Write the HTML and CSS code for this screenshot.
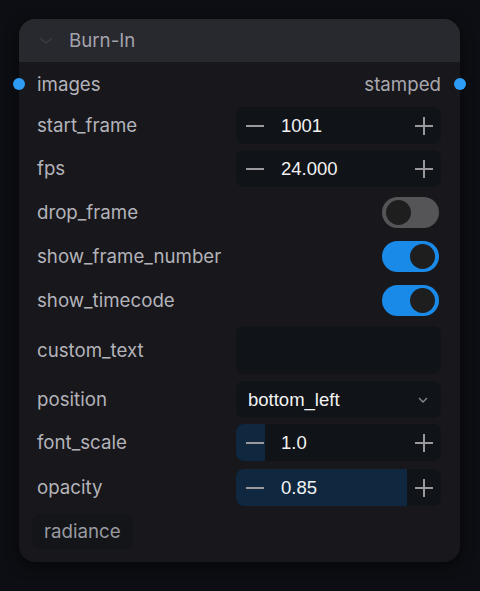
FILE: index.html
```html
<!DOCTYPE html>
<html lang="en">
<head>
    <meta charset="UTF-8">
    <meta name="viewport" content="width=device-width, initial-scale=1.0">
    <title>Burn-In</title>
    <link rel="stylesheet" href="styles.css">
</head>
<body>
    <div class="node">
        <div class="node-header">
            <svg class="collapse" width="16" height="10" viewBox="0 0 16 10"><path d="M2 2 L8 7 L14 2" fill="none" stroke="currentColor" stroke-width="1.4"/></svg>
            <span class="title">Burn-In</span>
        </div>

        <div class="node-body">
            <div class="row io">
                <span class="port port-in"></span>
                <span class="label">images</span>
                <span class="label out">stamped</span>
                <span class="port port-out"></span>
            </div>

            <div class="row">
                <span class="label">start_frame</span>
                <div class="number">
                    <span class="step minus"></span>
                    <span class="value">1001</span>
                    <span class="step plus"></span>
                </div>
            </div>

            <div class="row">
                <span class="label">fps</span>
                <div class="number">
                    <span class="step minus"></span>
                    <span class="value">24.000</span>
                    <span class="step plus"></span>
                </div>
            </div>

            <div class="row switch">
                <span class="label">drop_frame</span>
                <span class="toggle"></span>
            </div>

            <div class="row switch">
                <span class="label">show_frame_number</span>
                <span class="toggle on"></span>
            </div>

            <div class="row switch">
                <span class="label">show_timecode</span>
                <span class="toggle on"></span>
            </div>

            <div class="row tall">
                <span class="label">custom_text</span>
                <div class="text-input"></div>
            </div>

            <div class="row">
                <span class="label">position</span>
                <div class="select">
                    <span class="value">bottom_left</span>
                    <svg width="12" height="8" viewBox="0 0 12 8"><path d="M2 2 L6 6 L10 2" fill="none" stroke="currentColor" stroke-width="1.3"/></svg>
                </div>
            </div>

            <div class="row">
                <span class="label">font_scale</span>
                <div class="number">
                    <span class="fill" style="width: 14%"></span>
                    <span class="step minus"></span>
                    <span class="value">1.0</span>
                    <span class="step plus"></span>
                </div>
            </div>

            <div class="row last">
                <span class="label">opacity</span>
                <div class="number">
                    <span class="fill" style="width: 83.5%"></span>
                    <span class="step minus"></span>
                    <span class="value">0.85</span>
                    <span class="step plus"></span>
                </div>
            </div>

            <div class="tags">
                <span class="tag">radiance</span>
            </div>
        </div>
    </div>
</body>
</html>
```

FILE: styles.css
```css
body {
    margin: 0;
    padding: 19px;
    background-color: #0c0e13;
    font-family: Inter, "Noto Sans", sans-serif;
}

.node {
    width: 441px;
    height: 543px;
    background-color: #18171b;
    border-radius: 16px;
    box-shadow: 0 4px 14px rgba(0,0,0,0.5);
}

.node-header {
    height: 43px;
    display: flex;
    align-items: center;
    background-color: #28282f;
    border-radius: 16px 16px 0 0;
    padding-left: 19px;
}

.collapse {
    color: #3c3c46;
}

.title {
    margin-left: 15px;
    font-size: 18.7px;
    color: #a3a3ab;
}

.node-body {
    display: flex;
    flex-direction: column;
    gap: 6px;
    padding: 6px 19px 0 18px;
}

.row {
    position: relative;
    height: 37px;
    display: flex;
    align-items: center;
    justify-content: space-between;
}

.row.io {
    height: 32px;
    margin-bottom: 1px;
}

.row.switch {
    height: 38px;
}

.row.tall {
    height: 50px;
}

.row.last {
    margin-top: 2px;
}

.label {
    font-size: 18.7px;
    color: #b3b3ba;
}

.label.out {
    color: #a8a8af;
}

.port {
    position: absolute;
    top: 10px;
    width: 12px;
    height: 12px;
    border-radius: 50%;
    background-color: #2e9cf4;
}

.port-in {
    left: -24px;
}

.port-out {
    right: -25px;
}

.number,
.select,
.text-input {
    position: relative;
    width: 205px;
    height: 37px;
    box-sizing: border-box;
    background-color: #101318;
    border-radius: 8px;
    overflow: hidden;
}

.number {
    display: flex;
    align-items: center;
}

.text-input {
    height: 48px;
}

.fill {
    position: absolute;
    left: 0;
    top: 0;
    bottom: 0;
    background-color: #0f2840;
}

.value {
    position: relative;
    font-family: "Liberation Sans", Arial, sans-serif;
    font-size: 18.5px;
    color: #f2f2f2;
}

.number .value {
    flex: 1;
    margin-left: 17px;
}

.step {
    position: relative;
    width: 18px;
    height: 18px;
}

.step::before,
.step::after {
    content: "";
    position: absolute;
    background-color: #9a9a9e;
}

.step::before {
    left: 0;
    top: 8px;
    width: 18px;
    height: 2px;
}

.step.plus::after {
    left: 8px;
    top: 0;
    width: 2px;
    height: 18px;
}

.minus {
    margin-left: 10px;
}

.plus {
    margin-right: 8px;
}

.select {
    display: flex;
    align-items: center;
    justify-content: space-between;
    padding: 0 12px 0 12px;
    color: #8c8c92;
}

.toggle {
    position: relative;
    width: 57px;
    height: 31px;
    box-sizing: border-box;
    border-radius: 16px;
    background-color: #555558;
    margin-right: 2px;
}

.toggle::after {
    content: "";
    position: absolute;
    left: 4px;
    top: 3px;
    width: 25px;
    height: 25px;
    border-radius: 50%;
    background-color: #1e1e1e;
}

.toggle.on {
    background-color: #1a8ae8;
}

.toggle.on::after {
    left: 28px;
}

.tags {
    display: flex;
    margin-left: -5px;
    margin-top: 2px;
}

.tag {
    padding: 6px 12px;
    border-radius: 8px;
    background-color: #141519;
    font-size: 18.7px;
    color: #9a9aa1;
}
```
